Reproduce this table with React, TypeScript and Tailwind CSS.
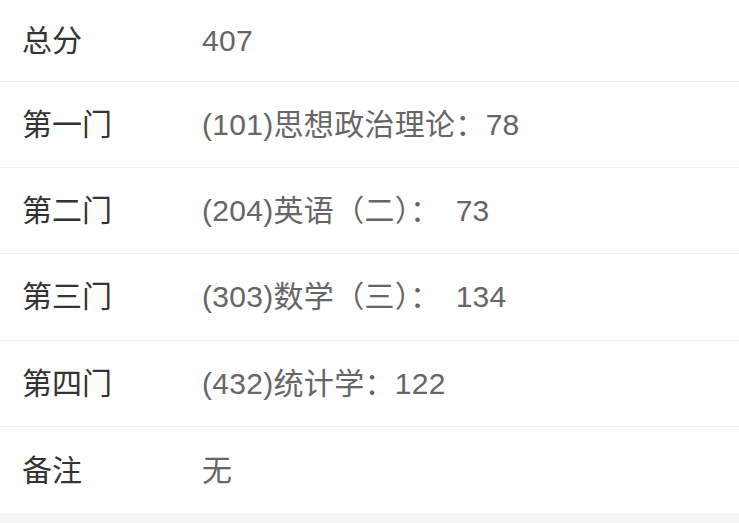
const rows: { label: string; value: string }[] = [
  { label: "总分", value: "407" },
  { label: "第一门", value: "(101)思想政治理论：78" },
  { label: "第二门", value: "(204)英语（二）：\u200273" },
  { label: "第三门", value: "(303)数学（三）：\u2002134" },
  { label: "第四门", value: "(432)统计学：122" },
  { label: "备注", value: "无" },
];

export default function App() {
  return (
    <div
      className="min-h-[523px] bg-[#f5f5f5]"
      style={{ fontFamily: '"Liberation Sans", "Noto Sans CJK SC", sans-serif' }}
    >
      <div className="bg-white">
        {rows.map((row, i) => (
          <div
            key={row.label}
            className={
              "flex items-center pl-[22px] text-[30px] " +
              (i === 0 ? "h-[81.5px] " : "h-[86.4px] ") +
              (i < rows.length - 1 ? "border-b border-[#efefef]" : "")
            }
          >
            <div className="w-[180px] shrink-0 text-[#333333]">{row.label}</div>
            <div className="text-[#666666] tracking-[0.3px]">{row.value}</div>
          </div>
        ))}
      </div>
    </div>
  );
}
